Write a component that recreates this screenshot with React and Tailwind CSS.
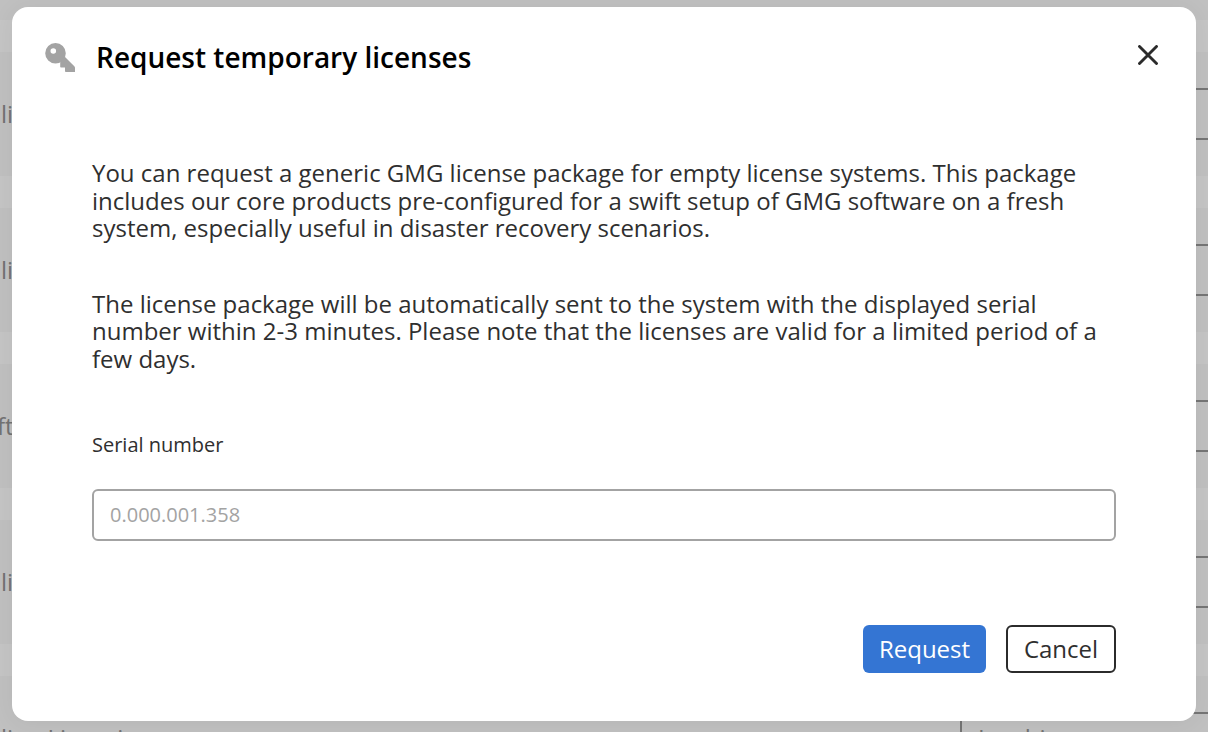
import React, { useState } from 'react';

// Cards of the page that stay visible round the dialog
const CARDS = ['li', 'li', 'ft', 'li'];

const KeyIcon = () => (
  <svg viewBox="0 0 30 29" className="w-[30px] h-[29px]" fill="#a3a3a3">
    <path
      fillRule="evenodd"
      d="M10.5 0a10.3 10.3 0 1 1 0 20.6a10.3 10.3 0 1 1 0-20.6zM8.3 5.2a2.8 2.8 0 1 0 0 5.6a2.8 2.8 0 1 0 0-5.6z"
    />
    <path d="M19.5 13.5L29.3 23.2Q30 23.9 30 24.8V28.9H20.8Q20 28.9 20 28V24.6H16Q15.2 24.6 15.2 23.8V19Z" />
  </svg>
);

const CloseIcon = () => (
  <svg viewBox="0 0 20 20" className="w-5 h-5" fill="none" stroke="#2b2b2b" strokeWidth="2.9" strokeLinecap="round">
    <path d="M1.5 1.5L18.5 18.5M18.5 1.5L1.5 18.5" />
  </svg>
);

const Backdrop = () => (
  <div className="h-full bg-[#c5c5c5] text-2xl text-[#727272] overflow-hidden">
    <div className="h-5 bg-[#c0c0c0]" />
    {CARDS.map((text, i) => (
      <div key={i} className="mt-8 h-[124px] bg-[#c0c0c0] pt-9">
        <div className="flex h-[52px] items-center justify-between">
          <span className={text === 'ft' ? '-ml-[3px]' : 'ml-px'}>{text}</span>
          <span className="h-full w-8 border-y-2 border-[#757575]" />
        </div>
      </div>
    ))}
    <div className="mt-8 h-[124px] bg-[#c0c0c0] pt-9">
      <div className="flex h-[52px] items-center justify-between">
        <span className="ml-px whitespace-nowrap">line Licensing</span>
        <span className="flex h-full w-[248px] items-center border-2 border-[#757575] border-r-0 pl-4">Lan hinzu</span>
      </div>
    </div>
  </div>
);

const App = () => {
  const [serial, setSerial] = useState('');

  return (
    <div className="relative h-screen w-full overflow-hidden font-['Open_Sans',sans-serif]">
      <Backdrop />

      <div className="absolute inset-0 flex items-start justify-center pt-[7px]">
        <div className="flex h-[714px] w-[1184px] flex-col rounded-2xl bg-white text-[#2f2f2f] shadow-[0_2px_24px_rgba(0,0,0,0.06)]">
          {/* Header */}
          <div className="flex h-[101px] items-center justify-between pl-[33px] pr-[38px]">
            <div className="flex items-center gap-[21px]">
              <KeyIcon />
              <h2 className="pb-0.5 text-[28px] font-semibold leading-9 text-black">Request temporary licenses</h2>
            </div>
            <button aria-label="Close" className="pb-[5px]">
              <CloseIcon />
            </button>
          </div>

          {/* Body */}
          <div className="flex flex-col px-20 pt-[51px]">
            <p className="text-2xl leading-[27.6px]">
              You can request a generic GMG license package for empty license systems. This package
              <br />
              includes our core products pre-configured for a swift setup of GMG software on a fresh
              <br />
              system, especially useful in disaster recovery scenarios.
            </p>
            <p className="mt-12 text-2xl leading-[27.6px]">
              The license package will be automatically sent to the system with the displayed serial
              <br />
              number within 2-3 minutes. Please note that the licenses are valid for a limited period of a
              <br />
              few days.
            </p>
            <label htmlFor="serial" className="mt-[58px] text-xl leading-7">Serial number</label>
            <input
              id="serial"
              value={serial}
              onChange={(e) => setSerial(e.target.value)}
              placeholder="0.000.001.358"
              className="mt-[30px] h-[52px] rounded-md border-2 border-[#a3a3a3] px-4 text-xl placeholder:text-[#a3a3a3]"
            />
          </div>

          {/* Actions */}
          <div className="mt-[84px] flex justify-end gap-5 px-20 text-2xl">
            <button className="h-12 w-[123px] rounded-md bg-[#3475d3] text-white">Request</button>
            <button className="h-12 w-[110px] rounded-md border-2 border-[#2b2b2b]">Cancel</button>
          </div>
        </div>
      </div>
    </div>
  );
};

export default App;
